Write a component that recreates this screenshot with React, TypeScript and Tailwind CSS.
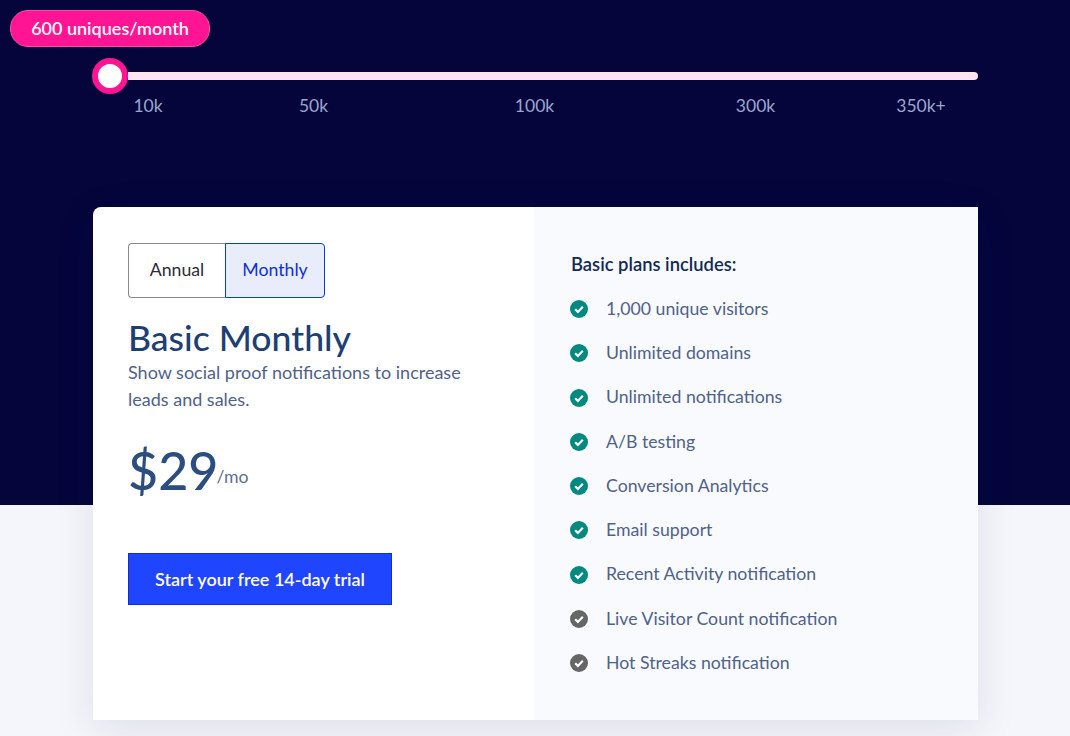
import React from "react";

const features = [
  { label: "1,000 unique visitors", on: true },
  { label: "Unlimited domains", on: true },
  { label: "Unlimited notifications", on: true },
  { label: "A/B testing", on: true },
  { label: "Conversion Analytics", on: true },
  { label: "Email support", on: true },
  { label: "Recent Activity notification", on: true },
  { label: "Live Visitor Count notification", on: false },
  { label: "Hot Streaks notification", on: false },
];

const ticks = [
  { label: "10k", cls: "w-[110px]" },
  { label: "50k", cls: "w-[221px]" },
  { label: "100k", cls: "w-[221px]" },
  { label: "300k", cls: "w-[221px]" },
  { label: "350k+", cls: "w-[110px]" },
];

const Check = ({ on }: { on: boolean }) => (
  <svg viewBox="0 0 18 18" className="w-[18px] h-[18px] shrink-0">
    <circle cx="9" cy="9" r="9" fill={on ? "#03897f" : "#666666"} />
    <path d="M5.2 9.3 L7.9 11.9 L12.8 6.8" fill="none" stroke="#fff" strokeWidth="2.2" />
  </svg>
);

export default function App() {
  return (
    <div className="h-[736px] overflow-hidden bg-[#f5f6fb] font-['Lato',sans-serif]">
      {/* Slider */}
      <div className="h-[505px] bg-[#05053c] pt-[10px]">
        <div className="ml-[10px] w-[200px] h-[37px] rounded-[18px] bg-[#ff1493] border border-[#ff4da6] flex items-center justify-center text-white text-[18px] font-semibold">
          600 uniques/month
        </div>
        <div className="ml-[92px] mt-[11px] w-[886px] h-[36px] flex items-center">
          <div className="w-[36px] h-[36px] rounded-full bg-white border-[6px] border-[#ff1493] shrink-0" />
          <div className="h-[8px] grow bg-[#ffe3f1] rounded-r-full" />
        </div>
        <div className="ml-[93px] flex text-[#9aa6cf] text-[17.5px] leading-[24px]">
          {ticks.map((t) => (
            <div key={t.label} className={`${t.cls} text-center`}>
              {t.label}
            </div>
          ))}
        </div>
      </div>

      {/* Pricing card */}
      <div className="ml-[93px] mt-[-298px] w-[885px] h-[513px] flex bg-white rounded-tl-[8px] shadow-[0_10px_40px_rgba(30,40,90,0.1)]">
        <div className="w-[441px] pl-[35px] pt-[36px]">
          <div className="flex w-[197px] h-[55px] text-[17.7px]">
            <div className="w-[97px] pb-[1px] border border-[#8a8a8a] border-r-0 rounded-l-[4px] flex items-center justify-center text-[#2c2c35]">
              Annual
            </div>
            <div className="w-[100px] pb-[1px] border border-[#0b3bd0] bg-[#e9ecfb] rounded-r-[4px] flex items-center justify-center text-[#0b2fd6]">
              Monthly
            </div>
          </div>
          <h1 className="mt-[18px] text-[35.6px] leading-[44px] text-[#1d3f74] font-medium">Basic Monthly</h1>
          <p className="mt-[-1px] w-[360px] text-[18px] leading-[27px] text-[#4f6288]">
            Show social proof notifications to increase leads and sales.
          </p>
          <div className="mt-[27px] flex items-baseline h-[60px]">
            <span className="text-[52px] leading-[60px] text-[#2c4d80] font-medium">$29</span>
            <span className="ml-[-2px] text-[17.7px] text-[#5e6f90] relative top-[-7px]">/mo</span>
          </div>
          <button className="mt-[53px] w-[264px] h-[52px] bg-[#1f45ff] border border-[#0f2fd0] text-white text-[18px] font-semibold">
            Start your free 14-day trial
          </button>
        </div>
        <div className="w-[444px] bg-[#f9fafd] pl-[36px] pt-[46px]">
          <h2 className="ml-px text-[18.4px] leading-[22px] font-semibold text-[#122a54]">Basic plans includes:</h2>
          <ul className="mt-[12px]">
            {features.map((f) => (
              <li key={f.label} className="h-[44.25px] flex items-center gap-[18px] text-[17.7px] text-[#4f6288]">
                <Check on={f.on} />
                <span>{f.label}</span>
              </li>
            ))}
          </ul>
        </div>
      </div>
    </div>
  );
}
